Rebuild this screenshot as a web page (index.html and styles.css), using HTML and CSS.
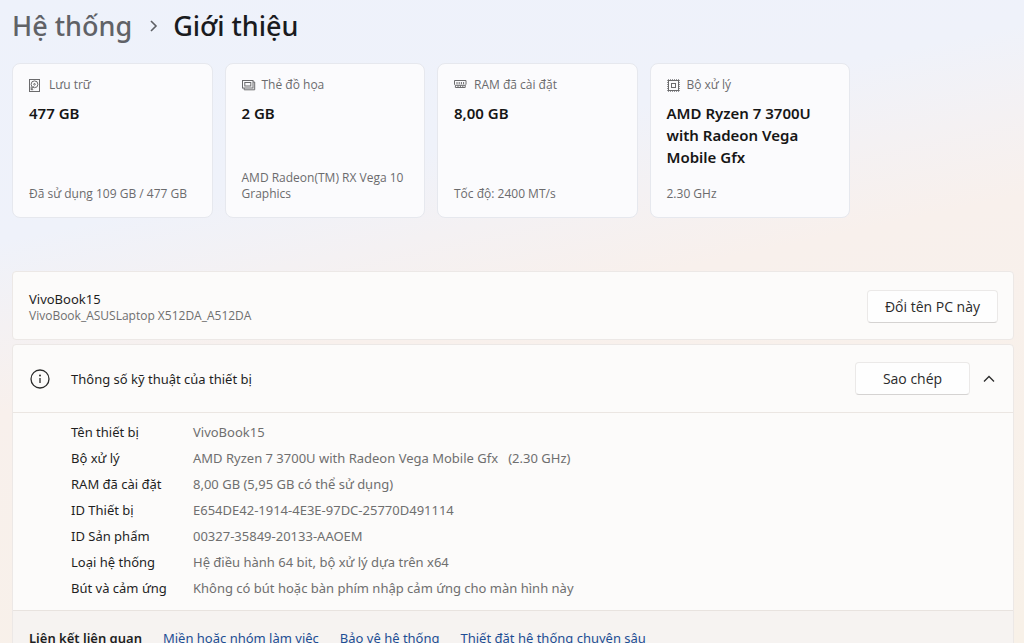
FILE: index.html
```html
<!DOCTYPE html>
<html lang="vi">
<head>
<meta charset="utf-8">
<meta name="viewport" content="width=device-width, initial-scale=1">
<title>Giới thiệu</title>
<link rel="stylesheet" href="styles.css">
</head>
<body>
<main class="page">
  <nav class="breadcrumb" aria-label="Breadcrumb">
    <a class="crumb" href="#">Hệ thống</a>
    <svg class="crumb-arrow" viewBox="0 0 10 14" aria-hidden="true"><path d="M2 2l5 5-5 5"/></svg>
    <h1 class="title">Giới thiệu</h1>
  </nav>

  <section class="cards">
    <article class="card">
      <h2 class="card-label">
        <svg class="icon" viewBox="0 0 14 14" aria-hidden="true"><rect x=".5" y="1.500" width="10" height="12"/><circle cx="5.500" cy="6.300" r="3.400"/><circle cx="5.500" cy="6.300" r=".8"/><path d="M2.200 11.700l2.600-3.400M2.200 8.700v3h2"/></svg>
        Lưu trữ
      </h2>
      <p class="card-value">477 GB</p>
      <p class="card-note">Đã sử dụng 109 GB / 477 GB</p>
    </article>
    <article class="card">
      <h2 class="card-label">
        <svg class="icon" viewBox="0 0 14 14" aria-hidden="true"><rect x=".5" y="2.500" width="10.500" height="7.500"/><rect x="2.800" y="4.500" width="6" height="3.500"/><path d="M2.200 10v1.800h10.500V4H11"/></svg>
        Thẻ đồ họa
      </h2>
      <p class="card-value">2 GB</p>
      <p class="card-note">AMD Radeon(TM) RX Vega 10 Graphics</p>
    </article>
    <article class="card">
      <h2 class="card-label">
        <svg class="icon" viewBox="0 0 14 14" aria-hidden="true"><path d="M.5 2.500h11.500v4l-.8.8v2.200H1.400V7.300l-.9-.8zM3 4v2.300M5.200 4v2.300M7.400 4v2.300M9.600 4v2.300M1.400 7.300h9.800M4 7.500v1.800M6.400 7.500v1.800M8.800 7.500v1.800"/></svg>
        RAM đã cài đặt
      </h2>
      <p class="card-value">8,00 GB</p>
      <p class="card-note">Tốc độ: 2400 MT/s</p>
    </article>
    <article class="card">
      <h2 class="card-label">
        <svg class="icon" viewBox="0 0 14 14" aria-hidden="true"><rect x="1.500" y="2.500" width="10" height="10"/><rect x="4.500" y="5.500" width="4" height="4"/><path stroke-dasharray="1 1" d="M1 1.800h11M1 13.200h11M.8 2v11M12.200 2v11"/></svg>
        Bộ xử lý
      </h2>
      <p class="card-value">AMD Ryzen 7 3700U with Radeon Vega Mobile Gfx</p>
      <p class="card-note">2.30 GHz</p>
    </article>
  </section>

  <section class="panel device">
    <div class="device-text">
      <p class="device-name">VivoBook15</p>
      <p class="device-model">VivoBook_ASUSLaptop X512DA_A512DA</p>
    </div>
    <button class="button" type="button">Đổi tên PC này</button>
  </section>

  <section class="panel specs">
    <header class="specs-head">
      <svg class="info" viewBox="0 0 20 20" aria-hidden="true"><circle cx="10" cy="10" r="9"/><path d="M10 9v5"/><circle class="dot" cx="10" cy="6.500" r="1"/></svg>
      <h2 class="specs-title">Thông số kỹ thuật của thiết bị</h2>
      <button class="button copy" type="button">Sao chép</button>
      <button class="toggle" type="button" aria-label="Thu gọn"><svg class="chevron" viewBox="0 0 12 8" aria-hidden="true"><path d="M1 6.500l5-5 5 5"/></svg></button>
    </header>
    <table class="spec-table">
      <tbody>
        <tr><th scope="row">Tên thiết bị</th><td>VivoBook15</td></tr>
        <tr><th scope="row">Bộ xử lý</th><td>AMD Ryzen 7 3700U with Radeon Vega Mobile Gfx &nbsp; (2.30 GHz)</td></tr>
        <tr><th scope="row">RAM đã cài đặt</th><td>8,00 GB (5,95 GB có thể sử dụng)</td></tr>
        <tr><th scope="row">ID Thiết bị</th><td>E654DE42-1914-4E3E-97DC-25770D491114</td></tr>
        <tr><th scope="row">ID Sản phẩm</th><td>00327-35849-20133-AAOEM</td></tr>
        <tr><th scope="row">Loại hệ thống</th><td>Hệ điều hành 64 bit, bộ xử lý dựa trên x64</td></tr>
        <tr><th scope="row">Bút và cảm ứng</th><td>Không có bút hoặc bàn phím nhập cảm ứng cho màn hình này</td></tr>
      </tbody>
    </table>
    <footer class="related">
      <h3 class="related-title">Liên kết liên quan</h3>
      <a class="link" href="#">Miền hoặc nhóm làm việc</a>
      <a class="link" href="#">Bảo vệ hệ thống</a>
      <a class="link" href="#">Thiết đặt hệ thống chuyên sâu</a>
    </footer>
  </section>
</main>
</body>
</html>
```
FILE: styles.css
```css
* {
  box-sizing: border-box;
}

html {
  scrollbar-width: none;
  background: linear-gradient(168deg, #eef2fb 0%, #eff2fa 28%, #f4f1f3 38%, #f8f0ec 48%, #f8f1e8 100%) fixed;
}

body {
  margin: 0;
  font-family: "Noto Sans", "Open Sans", sans-serif;
  font-size: 13px;
  line-height: 20px;
  color: #1f1f1f;
}

h1, h2, h3, p {
  margin: 0;
  font-weight: 400;
}

.page {
  padding: 5px 10px 0 12px;
}

.breadcrumb {
  display: flex;
  align-items: center;
  font-size: 27px;
  line-height: 42px;
}

.crumb {
  color: #606267;
  font-weight: 500;
  text-decoration: none;
}

.crumb-arrow {
  width: 10px;
  height: 14px;
  margin: 0 14px 0 17px;
  fill: none;
  stroke: #5d5f64;
  stroke-width: 1.6;
}

.title {
  font-size: 27px;
  font-weight: 500;
  color: #1a1b1e;
}

.cards {
  display: grid;
  grid-template-columns: repeat(auto-fit, minmax(180px, 1fr));
  gap: 12px;
  max-width: 838px;
  margin-top: 16px;
}

.card {
  display: flex;
  flex-direction: column;
  min-height: 155px;
  padding: 11px 16px 15px;
  background: #fbfbfd;
  border: 1px solid #e6e8ee;
  border-radius: 8px;
}

.card-label {
  display: flex;
  align-items: center;
  gap: 6px;
  font-family: "Open Sans", sans-serif;
  font-size: 12px;
  color: #6b6b6d;
}

.icon {
  width: 14px;
  height: 14px;
  fill: none;
  stroke: #6b6b6d;
  stroke-width: 1;
}

.card-value {
  margin-top: 7px;
  font-size: 15px;
  line-height: 22px;
  font-weight: 600;
  color: #161616;
}

.card-note {
  margin-top: auto;
  font-family: "Open Sans", sans-serif;
  font-size: 12px;
  line-height: 16px;
  color: #6b6b6d;
}

.panel {
  background: #fcfbfa;
  border: 1px solid #ece8e6;
  border-radius: 4px;
}

.device {
  display: flex;
  align-items: center;
  justify-content: space-between;
  min-height: 69px;
  margin-top: 53px;
  padding: 2px 15px 0 16px;
}

.device-name {
  line-height: 18px;
}

.device-model {
  font-family: "Open Sans", sans-serif;
  font-size: 12px;
  line-height: 16px;
  color: #6f6f6f;
}

.button {
  min-width: 115px;
  height: 33px;
  padding: 0 17px;
  font-family: "Open Sans", sans-serif;
  font-size: 14px;
  color: #2b2b2b;
  background: #fefefe;
  border: 1px solid #ebe9e8;
  border-bottom-color: #d5d3d2;
  border-radius: 4px;
}

.specs {
  margin-top: 4px;
}

.specs-head {
  display: flex;
  align-items: center;
  height: 68px;
  padding: 0 16px;
  border-bottom: 1px solid #ebe6e2;
}

.info {
  width: 22px;
  height: 20px;
  fill: none;
  stroke: #2b2b2b;
  stroke-width: 1.3;
}

.dot {
  fill: #2b2b2b;
  stroke: none;
}

.specs-title {
  flex: 1;
  padding-left: 20px;
  font-size: 13px;
}

.toggle {
  display: flex;
  margin-left: 11px;
  padding: 2px;
  background: none;
  border: 0;
}

.chevron {
  width: 12px;
  height: 8px;
  fill: none;
  stroke: #2b2b2b;
  stroke-width: 1.3;
}

.spec-table {
  margin: 6px 0 9px 58px;
  border-collapse: collapse;
  line-height: 20px;
}

.spec-table th,
.spec-table td {
  padding: 3px 0;
  text-align: left;
  font-weight: 400;
}

.spec-table th {
  width: 122px;
}

.spec-table td {
  color: #6f6f6f;
}

.related {
  display: flex;
  flex-wrap: wrap;
  gap: 21px;
  padding: 17px 16px;
  background: #f6f3f1;
  border-top: 1px solid #e8e3df;
}

.related-title {
  font-size: 13px;
  font-weight: 600;
}

.link {
  color: #1d4e94;
  text-decoration: none;
}
```
